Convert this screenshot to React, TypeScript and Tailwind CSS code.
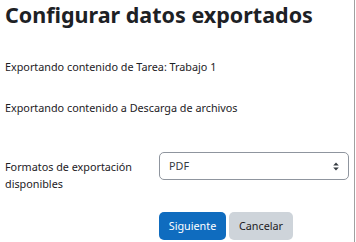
export default function App() {
  return (
    <div className="w-[355px] h-[242px] overflow-hidden border-r border-[#a0a0a0] bg-white text-[#1d2125] font-['Noto_Sans',sans-serif]">
      <h2 className="pl-[5px] text-[21.5px] leading-[30px] font-bold whitespace-nowrap">
        Configurar datos exportados
      </h2>

      <p className="pl-[5px] mt-[28px] text-[10.8px] leading-[17px]">
        Exportando contenido de Tarea: Trabajo 1
      </p>
      <p className="pl-[5px] mt-[24px] text-[10.8px] leading-[17px]">
        Exportando contenido a Descarga de archivos
      </p>

      <div className="flex items-start mt-[36px]">
        <div className="w-[159px] pl-[5px] pr-[10px] pt-[6px] text-[10.8px] leading-[17px]">
          Formatos de exportación disponibles
        </div>
        <div className="w-[190px] h-[28px] flex items-center justify-between border border-[#8f959e] rounded-[5px] pl-[9px] pr-[9px] text-[10.8px] text-[#343a40]">
          <span>PDF</span>
          <svg width="6" height="9" viewBox="0 0 6 9" fill="#343a40">
            <path d="M3 0.5 L5.8 3.6 L0.2 3.6 Z" />
            <path d="M3 8.5 L5.8 5.4 L0.2 5.4 Z" />
          </svg>
        </div>
      </div>

      <div className="flex gap-[3px] pl-[159px] mt-[20px]">
        <button className="w-[67px] h-[28px] rounded-[5px] bg-[#0f6cbf] text-white text-[10.8px]">
          Siguiente
        </button>
        <button className="w-[64px] h-[28px] rounded-[5px] bg-[#ced4da] text-[#1d2125] text-[10.8px]">
          Cancelar
        </button>
      </div>
    </div>
  );
}
